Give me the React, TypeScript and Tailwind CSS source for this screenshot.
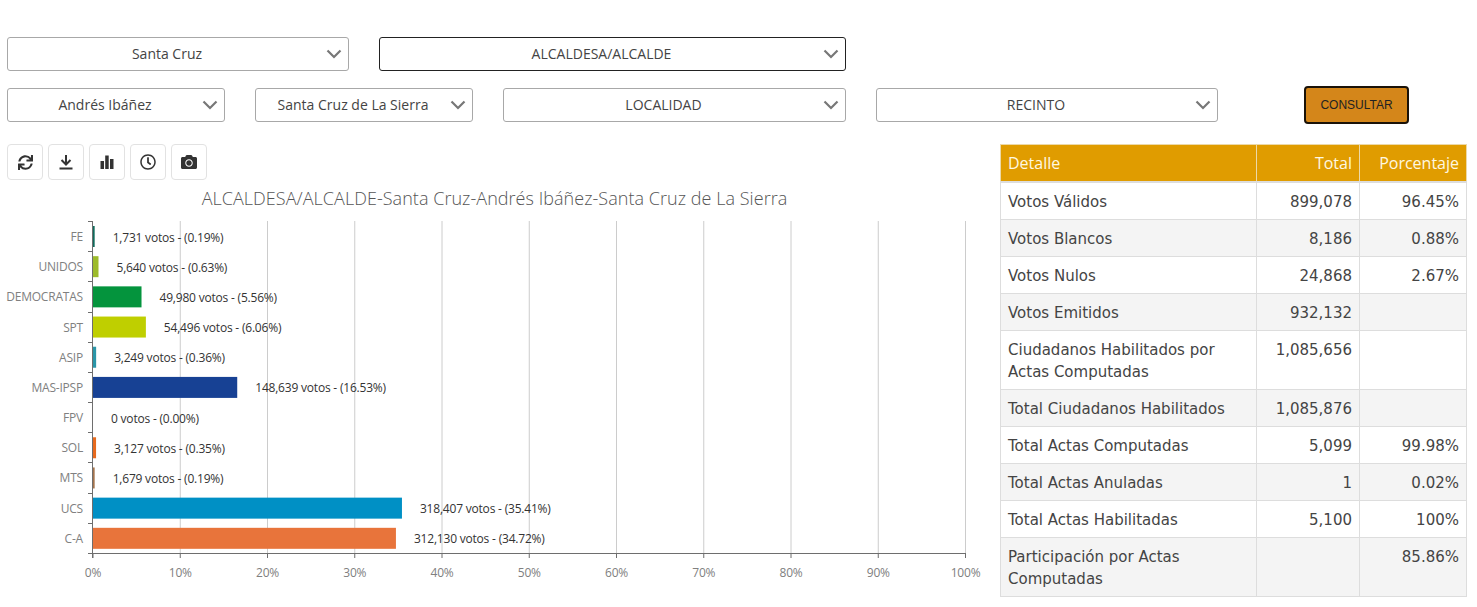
import { FaSync, FaRegClock, FaCamera } from "react-icons/fa";

const OFF = 184;
const X0 = 93;
const PER = 8.725;
const TOP = 221 - OFF;
const AXIS = 553 - OFF;
const BAND = (553 - 221) / 11;

const bars = [
  { n: "FE", l: "1,731 votos - (0.19%)", p: 0.19, c: "#0f6b5c" },
  { n: "UNIDOS", l: "5,640 votos - (0.63%)", p: 0.63, c: "#9dbb2b" },
  { n: "DEMOCRATAS", l: "49,980 votos - (5.56%)", p: 5.56, c: "#04943d" },
  { n: "SPT", l: "54,496 votos - (6.06%)", p: 6.06, c: "#bfcf00" },
  { n: "ASIP", l: "3,249 votos - (0.36%)", p: 0.36, c: "#2a96a8" },
  { n: "MAS-IPSP", l: "148,639 votos - (16.53%)", p: 16.53, c: "#174194" },
  { n: "FPV", l: "0 votos - (0.00%)", p: 0, c: "#888888" },
  { n: "SOL", l: "3,127 votos - (0.35%)", p: 0.35, c: "#e76a1e" },
  { n: "MTS", l: "1,679 votos - (0.19%)", p: 0.19, c: "#a5744d" },
  { n: "UCS", l: "318,407 votos - (35.41%)", p: 35.41, c: "#0090c5" },
  { n: "C-A", l: "312,130 votos - (34.72%)", p: 34.72, c: "#e8743b" },
];

const rows: [string, string, string][] = [
  ["Votos Válidos", "899,078", "96.45%"],
  ["Votos Blancos", "8,186", "0.88%"],
  ["Votos Nulos", "24,868", "2.67%"],
  ["Votos Emitidos", "932,132", ""],
  ["Ciudadanos Habilitados por Actas Computadas", "1,085,656", ""],
  ["Total Ciudadanos Habilitados", "1,085,876", ""],
  ["Total Actas Computadas", "5,099", "99.98%"],
  ["Total Actas Anuladas", "1", "0.02%"],
  ["Total Actas Habilitadas", "5,100", "100%"],
  ["Participación por Actas Computadas", "", "85.86%"],
];

function Select({ label, className }: { label: string; className: string }) {
  return (
    <div
      className={`relative h-[34px] flex items-center justify-center rounded-[3px] border bg-white pr-[22px] pb-[2px] text-[14px] text-[#444] ${className}`}
    >
      <span>{label}</span>
      <svg
        className="absolute right-[6px] top-[11px]"
        width="16"
        height="10"
        viewBox="0 0 16 10"
        fill="none"
        stroke="#777"
        strokeWidth="2.2"
      >
        <path d="M1.500 1.500 8 8l6.500-6.500" />
      </svg>
    </div>
  );
}

function ToolButton({ children }: { children: React.ReactNode }) {
  return (
    <div className="w-9 h-9 flex items-center justify-center rounded-[4px] border border-[#e2e2e2] bg-white text-[#333]">
      {children}
    </div>
  );
}

function Chart() {
  return (
    <svg width="1000" height="415" className="mt-1 block" style={{ fontFamily: "'Open Sans', sans-serif" }}>
      <text x="494.5" y={205 - OFF} textAnchor="middle" fontSize="18" fontWeight="300" fill="#555" letterSpacing="0.04">
        ALCALDESA/ALCALDE-Santa Cruz-Andrés Ibáñez-Santa Cruz de La Sierra
      </text>
      {Array.from({ length: 10 }, (_, i) => i + 1).map((i) => (
        <line key={i} x1={X0 + i * 10 * PER} x2={X0 + i * 10 * PER} y1={TOP} y2={AXIS} stroke="#ccc" />
      ))}
      {bars.map((b, i) => {
        const y = TOP + i * BAND;
        const w = b.p * PER;
        return (
          <g key={b.n}>
            <rect x={X0} y={y + 5} width={w} height={21} fill={b.c} />
            <text x={83} y={y + 20} textAnchor="end" fontSize="12" fill="#808080" letterSpacing="-0.2">
              {b.n}
            </text>
            <text x={X0 + w + 18} y={y + 20.500} fontSize="12" fill="#333" letterSpacing="-0.2">
              {b.l}
            </text>
            <line x1={88} x2={X0} y1={Math.round(y) + 0.5} y2={Math.round(y) + 0.5} stroke="#6e6e6e" />
          </g>
        );
      })}
      <line x1={X0 - 0.5} x2={X0 - 0.5} y1={TOP} y2={AXIS + 5} stroke="#6e6e6e" />
      <line x1={88} x2={966} y1={AXIS + 0.5} y2={AXIS + 0.5} stroke="#6e6e6e" />
      {Array.from({ length: 11 }, (_, i) => i).map((i) => (
        <g key={i}>
          <line x1={X0 + i * 10 * PER} x2={X0 + i * 10 * PER} y1={AXIS} y2={AXIS + 5} stroke="#6e6e6e" />
          <text x={X0 + i * 10 * PER} y={577 - OFF} textAnchor="middle" fontSize="12" fill="#808080" letterSpacing="-0.2">
            {i * 10}%
          </text>
        </g>
      ))}
    </svg>
  );
}

export default function App() {
  return (
    <div className="bg-white w-[1477px] h-[607px] overflow-hidden pt-[37px]" style={{ fontFamily: "'Open Sans', sans-serif" }}>
      <div className="flex gap-[30px] pl-[7px]">
        <Select label="Santa Cruz" className="w-[342px] border-[#a8a8a8]" />
        <Select label="ALCALDESA/ALCALDE" className="w-[467px] border-[#222]" />
      </div>
      <div className="flex items-center gap-[30px] pl-[7px] mt-[15px] h-[38px]">
        <Select label="Andrés Ibáñez" className="w-[218px] border-[#a8a8a8]" />
        <Select label="Santa Cruz de La Sierra" className="w-[218px] border-[#a8a8a8]" />
        <Select label="LOCALIDAD" className="w-[343px] border-[#a8a8a8]" />
        <Select label="RECINTO" className="w-[342px] border-[#a8a8a8]" />
        <button
          className="ml-[56px] w-[105px] h-[38px] rounded-[4px] border-2 border-[#1a1208] bg-[#d4861a] text-[12px] text-[#222]"
          style={{ fontFamily: "'Liberation Sans', sans-serif" }}
        >
          CONSULTAR
        </button>
      </div>
      <div className="flex mt-5">
        <div className="w-[1000px]">
          <div className="flex gap-[5px] pl-[7px]">
            <ToolButton>
              <FaSync size={15} />
            </ToolButton>
            <ToolButton>
              <svg width="16" height="16" viewBox="0 0 16 16" fill="none" stroke="#333" strokeWidth="2">
                <path d="M8 1v9M3.500 6 8 10.500 12.500 6M1.500 14.500h13" />
              </svg>
            </ToolButton>
            <ToolButton>
              <svg width="16" height="16" viewBox="0 0 16 16" fill="#333">
                <rect x="1.500" y="7" width="3.500" height="8" />
                <rect x="6.200" y="1.500" width="3.500" height="13.500" />
                <rect x="11" y="5" width="3.500" height="10" />
              </svg>
            </ToolButton>
            <ToolButton>
              <FaRegClock size={16} />
            </ToolButton>
            <ToolButton>
              <FaCamera size={16} />
            </ToolButton>
          </div>
          <Chart />
        </div>
        <table
          className="w-[466px] h-fit border-collapse table-fixed text-[15px] leading-[22px] text-[#444]"
          style={{ fontFamily: "'DejaVu Sans', sans-serif" }}
        >
          <colgroup>
            <col className="w-[256px]" />
            <col className="w-[103px]" />
            <col className="w-[107px]" />
          </colgroup>
          <thead>
            <tr className="bg-[#e09c00] text-[#fff8e0]" style={{ fontFamily: "'Open Sans', sans-serif" }}>
              <th className="border border-[#ecd9a8] border-b-2 border-b-[#ddd] px-[7px] py-[7px] text-left font-normal text-[16px]">Detalle</th>
              <th className="border border-[#ecd9a8] border-b-2 border-b-[#ddd] px-[7px] py-[7px] text-right font-normal text-[16px]">Total</th>
              <th className="border border-[#ecd9a8] border-b-2 border-b-[#ddd] px-[7px] py-[7px] text-right font-normal text-[16px]">Porcentaje</th>
            </tr>
          </thead>
          <tbody>
            {rows.map((r, i) => (
              <tr key={r[0]} className={i % 2 === 1 ? "bg-[#f4f4f4]" : "bg-white"}>
                <td className="border border-[#ddd] px-[7px] pt-[8px] pb-[6px] align-top">{r[0]}</td>
                <td className="border border-[#ddd] px-[7px] pt-[8px] pb-[6px] align-top text-right">{r[1]}</td>
                <td className="border border-[#ddd] px-[7px] pt-[8px] pb-[6px] align-top text-right">{r[2]}</td>
              </tr>
            ))}
          </tbody>
        </table>
      </div>
    </div>
  );
}
